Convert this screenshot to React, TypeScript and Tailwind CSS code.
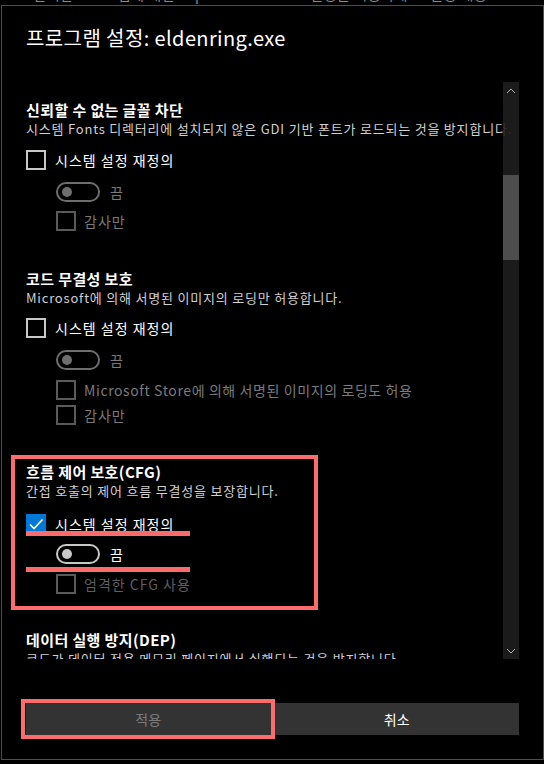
import React from "react";

type BoxProps = { state: "on" | "off" | "disabled" };

const CheckBox: React.FC<BoxProps> = ({ state }) => {
  if (state === "on") {
    return (
      <span className="w-[20px] h-[20px] bg-[#0078d7] flex items-center justify-center shrink-0">
        <svg width="16" height="16" viewBox="0 0 16 16">
          <path d="M2 8.5 L6 12.5 L14.5 3.5" fill="none" stroke="#ffffff" strokeWidth="1.6" />
        </svg>
      </span>
    );
  }
  return (
    <span
      className={`w-[20px] h-[20px] border-2 shrink-0 ${
        state === "off" ? "border-[#c8c8c8]" : "border-[#5a5a5a]"
      }`}
    ></span>
  );
};

const Toggle: React.FC<{ enabled?: boolean }> = ({ enabled }) => (
  <div className="flex items-center gap-[10px] h-[20px]">
    <span
      className={`w-[44px] h-[20px] rounded-full border-2 flex items-center pl-[4px] ${
        enabled ? "border-[#c8c8c8]" : "border-[#6e6e6e]"
      }`}
    >
      <span
        className={`w-[10px] h-[10px] rounded-full ${enabled ? "bg-[#c8c8c8]" : "bg-[#6e6e6e]"}`}
      ></span>
    </span>
    <span className={`text-[14px] leading-[20px] ${enabled ? "text-white" : "text-[#7a7a7a]"}`}>끔</span>
  </div>
);

const MainRow: React.FC<{ checked?: boolean; className?: string }> = ({ checked, className }) => (
  <div className={`flex items-center gap-[9px] h-[20px] ${className ?? ""}`}>
    <CheckBox state={checked ? "on" : "off"} />
    <span className="text-[14px] leading-[20px] tracking-[1px] text-white">시스템 설정 재정의</span>
  </div>
);

const SubCheck: React.FC<{ label: string; className?: string; dim?: boolean; track?: string }> = ({
  label,
  className,
  dim,
  track,
}) => (
  <div className={`flex items-center gap-2 h-[20px] pl-[30px] ${className ?? ""}`}>
    <CheckBox state="disabled" />
    <span
      className={`text-[14px] leading-[20px] whitespace-nowrap ${track ?? "tracking-[1px]"} ${
        dim ? "text-[#5e5e5e]" : "text-[#7a7a7a]"
      }`}
    >
      {label}
    </span>
  </div>
);

const SectionHead: React.FC<{ title: string; desc: string; className?: string }> = ({ title, desc, className }) => (
  <div className={className}>
    <h3 className="text-[15px] leading-[20px] font-bold tracking-[0.4px] text-white whitespace-nowrap">{title}</h3>
    <p className="text-[13px] leading-[18px] tracking-[0.8px] text-[#d0d0d0] whitespace-nowrap">{desc}</p>
  </div>
);

export default function App() {
  return (
    <div className="w-[544px] h-[764px] bg-black overflow-hidden font-['Noto_Sans_CJK_KR','Noto_Sans',sans-serif]">
      {/* page text behind the dialog */}
      <div className="h-[5px] overflow-hidden pl-[33px]">
        <p className="-mt-[15px] text-[14px] leading-[18px] tracking-[0.6px] text-[#8a8a8a] whitespace-nowrap">
          선택한 프로그램에 대한 Exploit Protection 설정을 적용하세요. 변경 내용
        </p>
      </div>

      <div className="ml-[1px] w-[543px] h-[755px] border border-[#4d4d4d] bg-black flex flex-col relative">
        <h1 className="pt-[18px] pl-[24px] text-[20px] leading-[28px] tracking-[0.4px] text-white">
          프로그램 설정: eldenring.exe
        </h1>

        {/* scroll region */}
        <div className="mt-[30px] ml-[24px] w-[493px] h-[577px] relative overflow-hidden">
          <div className="pt-[18px]">
            <SectionHead
              title="신뢰할 수 없는 글꼴 차단"
              desc="시스템 Fonts 디렉터리에 설치되지 않은 GDI 기반 폰트가 로드되는 것을 방지합니다."
            />
            <MainRow className="mt-[12px]" />
            <div className="mt-[12px] pl-[30px]">
              <Toggle />
            </div>
            <SubCheck label="감사만" className="mt-[9px]" />

            <SectionHead
              className="mt-[38px]"
              title="코드 무결성 보호"
              desc="Microsoft에 의해 서명된 이미지의 로딩만 허용합니다."
            />
            <MainRow className="mt-[11px]" />
            <div className="mt-[12px] pl-[30px]">
              <Toggle />
            </div>
            <SubCheck
              label="Microsoft Store에 의해 서명된 이미지의 로딩도 허용"
              className="mt-[10px]"
              track="tracking-[0.6px]"
            />
            <SubCheck label="감사만" className="mt-[5px]" />

            <SectionHead
              className="mt-[37px]"
              title="흐름 제어 보호(CFG)"
              desc="간접 호출의 제어 흐름 무결성을 보장합니다."
            />
            <MainRow checked className="mt-[14px]" />
            <div className="mt-[10px] pl-[30px]">
              <Toggle enabled />
            </div>
            <SubCheck label="엄격한 CFG 사용" className="mt-[10px]" dim />

            <SectionHead
              className="mt-[36px]"
              title="데이터 실행 방지(DEP)"
              desc="코드가 데이터 전용 메모리 페이지에서 실행되는 것을 방지합니다."
            />
          </div>

          {/* scrollbar */}
          <div className="absolute right-0 top-0 w-[16px] h-full bg-[#1e1e1e]/90 flex flex-col">
            <div className="h-[17px] flex items-center justify-center">
              <svg width="10" height="6" viewBox="0 0 10 6">
                <path d="M1 5 L5 1 L9 5" fill="none" stroke="#b0b0b0" strokeWidth="1" />
              </svg>
            </div>
            <div className="flex-1">
              <div className="mt-[76px] h-[85px] bg-[#4d4d4d]"></div>
            </div>
            <div className="h-[17px] flex items-center justify-center">
              <svg width="10" height="6" viewBox="0 0 10 6">
                <path d="M1 1 L5 5 L9 1" fill="none" stroke="#b0b0b0" strokeWidth="1" />
              </svg>
            </div>
          </div>
        </div>

        {/* buttons */}
        <div className="mt-[44px] ml-[24px] w-[493px] grid grid-cols-2 gap-1">
          <button className="h-[32px] bg-[#333333] text-[14px] text-[#7a7a7a]">적용</button>
          <button className="h-[32px] bg-[#333333] text-[14px] text-white">취소</button>
        </div>

        {/* red annotations */}
        <div className="absolute left-[9px] top-[449px] w-[307px] h-[155px] border-4 border-[#fd6c6c]"></div>
        <div className="absolute left-[24px] top-[525px] w-[164px] h-[5px] bg-[#fd6c6c]"></div>
        <div className="absolute left-[24px] top-[561px] w-[164px] h-[5px] bg-[#fd6c6c]"></div>
        <div className="absolute left-[19px] top-[693px] w-[254px] h-[40px] border-4 border-[#fd6c6c]"></div>
      </div>
    </div>
  );
}
